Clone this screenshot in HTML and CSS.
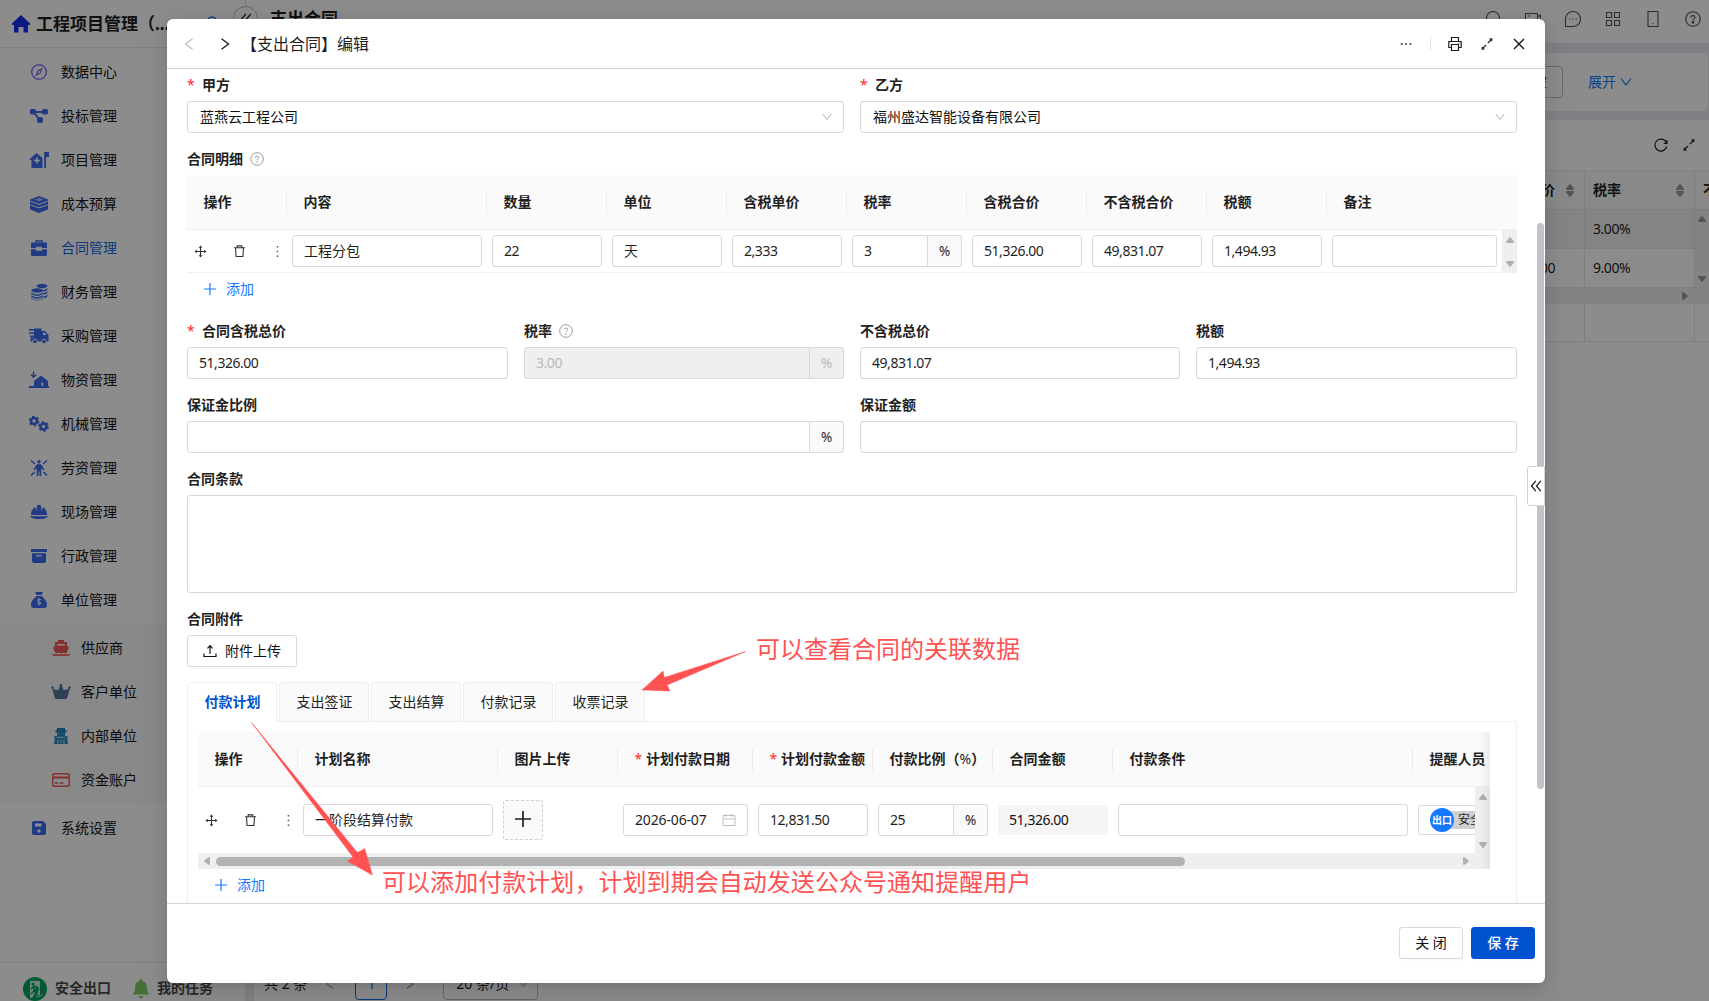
FILE: index.html
```html
<!DOCTYPE html>
<html lang="zh-CN">
<head>
<meta charset="utf-8">
<title>支出合同</title>
<link rel="stylesheet" href="styles.css">
</head>
<body>
<svg class="defs" width="0" height="0" aria-hidden="true">
  <symbol id="chev" viewBox="0 0 12 12"><path d="M1 2.500 6 9l5-6.500" fill="none" stroke="currentColor" stroke-width="1.200"/></symbol>
  <symbol id="left" viewBox="0 0 12 12"><path d="M9.500.800 2.500 6l7 5.200" fill="none" stroke="currentColor" stroke-width="1.200"/></symbol>
  <symbol id="right" viewBox="0 0 12 12"><path d="M2.500.800 9.500 6l-7 5.200" fill="none" stroke="currentColor" stroke-width="1.400"/></symbol>
  <symbol id="dbl" viewBox="0 0 12 12"><path d="M5.800.800 1.500 6l4.300 5.200M10.800.800 6.500 6l4.300 5.200" fill="none" stroke="currentColor" stroke-width="1.300"/></symbol>
  <symbol id="expand" viewBox="0 0 14 14"><path d="M7.800 6.200 11 3M6.200 7.800 3 11" stroke="currentColor" stroke-width="1.200"/><path d="M9 1.500 12.500 1.200l-.4 3.500zM5 12.500 1.500 12.800l.4-3.500z" fill="currentColor"/></symbol>
  <symbol id="move" viewBox="0 0 14 14"><path d="M7 2v10M2 7h10" stroke="currentColor" stroke-width="1.200"/><path d="M7 .500 9 3H5zM7 13.500 9 11H5zM.500 7 3 5v4zM13.500 7 11 5v4z" fill="currentColor"/></symbol>
  <symbol id="trash" viewBox="0 0 14 14"><path d="M1 3.500h12M4.500 3.500v-2h5v2M2.700 3.500l.6 9.400h7.400l.6-9.400" fill="none" stroke="currentColor" stroke-width="1.200"/></symbol>
  <symbol id="plus" viewBox="0 0 14 14"><path d="M7 1v12M1 7h12" stroke="currentColor" stroke-width="1.200"/></symbol>
  <symbol id="help" viewBox="0 0 16 16"><circle cx="8" cy="8" r="7.200" fill="none" stroke="currentColor"/><path d="M6 6.500C6 3.900 10 4 10 6.400c0 1.400-2 1.500-2 3" fill="none" stroke="currentColor"/><circle cx="8" cy="11.400" r=".8" fill="currentColor"/></symbol>
  <symbol id="up" viewBox="0 0 8 6"><path d="M3.200.600Q4 0 4.800.600L8 4.800Q8 6 7 6H1Q0 6 0 4.800z" fill="currentColor"/></symbol>
  <symbol id="down" viewBox="0 0 8 6"><path d="M3.200 5.400Q4 6 4.800 5.400L8 1.200Q8 0 7 0H1Q0 0 0 1.200z" fill="currentColor"/></symbol>
</svg>

<div class="app">
  <aside class="side">
    <div class="brand">
      <svg width="18" height="18" viewBox="0 0 18 18"><path d="M9 0 18 8.500V10h-2v7.500h-4.500V12h-5v5.500H2V10H0V8.500z" fill="#1230f5"/></svg>
      <span>工程项目管理（...</span>
      <svg class="find" width="14" height="14" viewBox="0 0 14 14"><circle cx="6" cy="6" r="5" fill="none" stroke="#1677ff" stroke-width="1.400"/><path d="m9.500 9.500 4 4" stroke="#1677ff"/></svg>
    </div>
    <nav class="menu">
      <a class="item"><svg viewBox="0 0 20 20"><circle cx="10" cy="10" r="7.300" fill="none" stroke="#8a76f0" stroke-width="1.500"/><path d="m14 5.500-2.500 6.300L6 14.500l2.500-6.300z" fill="#8a76f0"/><circle cx="10" cy="10" r="1.100" fill="#fff"/></svg>数据中心</a>
      <a class="item"><svg viewBox="0 0 20 20"><path d="M4 6h12M5 6l6 9" stroke="currentColor" stroke-width="2"/><rect x="1" y="3" width="6" height="5.500" rx="1.800" fill="currentColor"/><rect x="13" y="3" width="6" height="5.500" rx="1.800" fill="currentColor"/><rect x="8" y="11" width="6" height="6" rx="2.500" fill="currentColor"/></svg>投标管理</a>
      <a class="item"><svg viewBox="0 0 20 20"><path d="M0 9.500 7.500 3l6 5V18H2.500v-8zM15.500 2H20v5h-3v11h-1.800V2z" fill="currentColor"/><path d="M8 7.500v6M5 10.500h6" stroke="#fff" stroke-width="1.600"/></svg>项目管理</a>
      <a class="item"><svg viewBox="0 0 20 20"><path d="M10 2 19 5.500v10L10 19 1 15.500v-10z" fill="currentColor"/><path d="M1.500 7.300 10 10.500l8.500-3.200M1.500 10.800l5 2 3.500 1 3.500-1 5-2" fill="none" stroke="#fff" stroke-width="1"/><path d="m5.500 5.600 4.500-1.800 4.500 1.800-4.500 1.800z" fill="#fff" opacity=".55"/></svg>成本预算</a>
      <a class="item on"><svg viewBox="0 0 20 20"><path d="M7 4.500V3h6v1.500" fill="none" stroke="#3b6cf0" stroke-width="1.600"/><path d="M3 4.500h14q1 0 1 1V10h-5V8.800H7V10H2V5.500q0-1 1-1zM2 11.200h5v1.600h6v-1.600h5V17q0 1-1 1H3q-1 0-1-1z" fill="#3b6cf0"/></svg>合同管理</a>
      <a class="item"><svg viewBox="0 0 20 20"><g fill="currentColor"><ellipse cx="13" cy="4" rx="5.500" ry="2.200"/><path d="M12 8q5 0 6.500-2v1.500Q17 10 12 9.500zM14.500 11q3-.5 4-2v1.500q-.8 2-4 2.300zM14.500 14.500q3-.5 4-2V14q-.8 2-4 2.300z"/><ellipse cx="8" cy="8.500" rx="5.800" ry="2.200"/><path d="M2.200 10.500q6 4 11.800 0V12q-6 4-11.800 0zM2.200 13.300q6 4 11.800 0v1.500q-6 4-11.800 0zM2.200 16q6 4 11.800 0v.8q-6 3.500-11.800 0z"/></g></svg>财务管理</a>
      <a class="item"><svg viewBox="0 0 20 20"><path d="M0 3.700h5M0 7h5M1 10.300h4" stroke="currentColor" stroke-width="1.400"/><path d="M5 2.500h7.500V5H16l3.500 4v6.500H1.500v-4H5z" fill="currentColor"/><path d="M14 6.500h1.500l2 2.500H14z" fill="#fff"/><circle cx="6" cy="15.500" r="2.300" fill="currentColor" stroke="#fff"/><circle cx="15" cy="15.500" r="2.300" fill="currentColor" stroke="#fff"/></svg>采购管理</a>
      <a class="item"><svg viewBox="0 0 20 20"><path d="M4.500 1.500V7M2 4.700 4.500 7.200 7 4.700" fill="none" stroke="currentColor" stroke-width="1.400"/><path d="M5 16v-5l7-5.500L19 11v5h1v2H0v-2z" fill="currentColor"/><path d="M12.500 16v-4.500l1.800 2V16z" fill="#fff"/></svg>物资管理</a>
      <a class="item"><svg viewBox="0 0 20 20"><g fill="none" stroke="currentColor"><circle cx="5" cy="7" r="3" stroke-width="2.600"/><circle cx="5" cy="7" r="4.600" stroke-width="1.500" stroke-dasharray="2.400 2.410"/><circle cx="14.500" cy="12.500" r="3" stroke-width="2.600"/><circle cx="14.500" cy="12.500" r="4.600" stroke-width="1.500" stroke-dasharray="2.400 2.410"/></g></svg>机械管理</a>
      <a class="item"><svg viewBox="0 0 20 20"><path d="m2 2.500 4 3.500M18 2.500 14 6M2 17.500l3.500-3.500M18 17.500 14.500 14" stroke="currentColor" stroke-width="1.500"/><circle cx="10" cy="3.800" r="1.700" fill="currentColor"/><path d="M8 6.300h4l3.500 5-1.200 1-2-2V18h-1.800v-4.500h-1V18H7.700v-7.700l-2 2-1.200-1z" fill="currentColor"/></svg>劳资管理</a>
      <a class="item"><svg viewBox="0 0 20 20"><path d="M2 13q-.3-5 4-8l1.500 4L8 3.500q2-1.500 4 0L12.500 9 14 5q4.300 3 4 8zM1 14.200h18q-1 2.800-9 2.800t-9-2.800z" fill="currentColor"/></svg>现场管理</a>
      <a class="item"><svg viewBox="0 0 20 20"><path d="M2 3h16v3H2zM3 7.200h14V15q0 2-2 2H5q-2 0-2-2z" fill="currentColor"/><path d="M7 9.800h6" stroke="#fff" stroke-width="1.200"/></svg>行政管理</a>
      <a class="item"><svg viewBox="0 0 20 20"><path d="M6 2h8l-1.500 3h-5zM7.500 6h5q5.500 4.500 5.500 9 0 3-3 3H5q-3 0-3-3 0-4.500 5.500-9z" fill="currentColor"/><path d="M12 9.800Q10 8.800 8.800 9.700q-1 1.500 1.200 2t1.800 1.900q-1.300 1.200-3.600 0M10 8v7.500" fill="none" stroke="#fff"/></svg>单位管理</a>
      <div class="sub">
        <a class="item"><svg viewBox="0 0 20 20" fill="#f25555"><path d="M7 2h6v2h3v4l2 1.500-2.500 5.500h-11L2 9.500 4 8V4h3z"/><path d="M6 6h8v1.500H6z" fill="#fff"/><path d="M1 15.500q2.500 2 4.500 0 2.500 2 4.500 0 2.500 2 4.500 0 2.500 2 4.500 0V17q-2.500 2-4.500.5-2 1.500-4.500 0-2 1.500-4.500 0Q3.500 19 1 17z"/></svg>供应商</a>
        <a class="item"><svg viewBox="0 0 20 20" fill="#55779f"><path d="M1 5.500q3.500 3 6.500 2.500L9 3.500h2l1.500 4.500q3 .5 6.500-2.500L16.500 15q-.5 2-2 2h-9q-1.500 0-2-2z"/><circle cx="1.500" cy="5.500" r="1.300"/><circle cx="18.500" cy="5.500" r="1.300"/><circle cx="10" cy="3" r="1.300"/></svg>客户单位</a>
        <a class="item"><svg viewBox="0 0 20 20" fill="#2385bd"><path d="M6 2h8v2h1.500v2.500H14V10h2.500v2.500H16L17 18H3l1-5.500h-.5V10H6V6.500H4.500V4H6z"/><path d="M7.500 7.500h1M11.500 7.500h1M5.500 11.300h9M7 13.500V18M10 13.500V17M13 13.500V18" stroke="#fff" stroke-width=".8"/></svg>内部单位</a>
        <a class="item"><svg viewBox="0 0 20 20"><rect x="1.800" y="3.800" width="16.400" height="12.400" rx="1.500" fill="none" stroke="#f25555" stroke-width="1.500"/><path d="M2 7.500h16" stroke="#f25555" stroke-width="2"/><path d="M4 13h3M8.500 13h4" stroke="#f25555" stroke-width="1.300"/></svg>资金账户</a>
      </div>
      <a class="item"><svg viewBox="0 0 20 20"><path d="M5 3h9l3 3v9q0 2-2 2H5q-2 0-2-2V5q0-2 2-2z" fill="currentColor"/><path d="M6 5.500h6.500v3H6z" fill="#fff"/><circle cx="10" cy="13" r="1.700" fill="#fff"/></svg>系统设置</a>
    </nav>
    <div class="user">
      <svg width="24" height="24" viewBox="0 0 24 24"><circle cx="12" cy="12" r="12" fill="#00a45f"/><path d="M7 4h10v14h-4l3-5-2-3-3 3 1 3-3 5H7z" fill="#c9efdc"/><circle cx="10" cy="7" r="1.500" fill="#00a45f"/><path d="m8 12 3-3 3 1 2 2M11 10v4l-3 3M11 14l3 2v4" stroke="#00a45f" fill="none" stroke-width="1.500"/><path d="M13 19q4 2 7-2" stroke="#c9efdc" fill="none"/></svg>
      <b>安全出口</b>
      <svg class="bell" width="18" height="20" viewBox="0 0 18 20"><path d="M9 0q1.200 0 1.200 1.800Q15 3 15 9q0 4.500 2.500 6.500H.500Q3 13.500 3 9q0-6 4.800-7.200Q7.800 0 9 0zM6.500 17h5q-.5 2.500-2.500 2.500T6.500 17z" fill="#7fcc66"/></svg>
      <b>我的任务</b>
    </div>
  </aside>

  <main class="main">
    <div class="fold"><svg width="12" height="12"><use href="#dbl"/></svg></div>
    <header class="top">
      <b>支出合同</b>
      <div class="tools">
        <svg viewBox="0 0 16 16"><circle cx="8" cy="7" r="6.500"/><path d="m12.500 12 3 3.500"/></svg>
        <svg viewBox="0 0 16 16"><path d="M.500 2.500h12v11H.500zM12.500 6l3-2v8l-3-2M3 5h2"/></svg>
        <svg viewBox="0 0 16 16"><path d="M.500 15.500V8A7.500 7.500 0 1 1 8 15.500zM4.200 8h1.300M7.400 8h1.300M10.600 8h1.300"/></svg>
        <svg viewBox="0 0 16 16"><path d="M1.500 1.500h5v5h-5zM9.500 1.500h5v5h-5zM1.500 9.500h5v5h-5zM9.500 9.500h5v5h-5z"/></svg>
        <svg viewBox="0 0 16 16"><path d="M3 .500h10v15H3zM7.500 12.500h1"/></svg>
        <svg viewBox="0 0 16 16"><use href="#help"/></svg>
      </div>
    </header>
    <section class="filter"><span class="reset">清 空</span><span class="more">展开<svg width="12" height="12"><use href="#chev"/></svg></span></section>
    <section class="list">
      <div class="bar">
        <svg width="14" height="14" viewBox="0 0 14 14"><path d="M12.400 4.500A6 6 0 1 0 12.800 8.500M12.900 2v3.300H9.800" fill="none" stroke="currentColor" stroke-width="1.200"/></svg>
        <svg width="14" height="14"><use href="#expand"/></svg>
      </div>
      <div class="grid">
        <div class="h price">含税总价<span class="sort"><svg><use href="#up"/></svg><svg><use href="#down"/></svg></span></div>
        <div class="h">税率<span class="sort"><svg><use href="#up"/></svg><svg><use href="#down"/></svg></span></div>
        <div class="h last">不</div>
        <div class="hl"></div><div class="hl num">3.00%</div>
        <div class="vs"><svg><use href="#up"/></svg><svg><use href="#down"/></svg></div>
        <div class="num price">50,000.00</div><div class="num">9.00%</div>
        <div class="hs"><svg width="8" height="6"><use href="#up"/></svg></div>
        <div class="foot"></div><div class="foot"></div><div class="foot last"></div>
      </div>
      <div class="pager"><span>共 2 条</span><svg width="10" height="10"><use href="#left"/></svg><span class="page num">1</span><svg width="10" height="10"><use href="#right"/></svg><span class="size">20 条/页<svg width="9" height="9"><use href="#chev"/></svg></span></div>
    </section>
  </main>
</div>

<div class="mask">
  <div class="modal">
    <header class="mhead">
      <svg class="dim" width="12" height="12"><use href="#left"/></svg>
      <svg class="next" width="12" height="12"><use href="#right"/></svg>
      <h1>【支出合同】编辑</h1>
      <div class="mtools">
        <svg width="12" height="12" viewBox="0 0 12 12"><path d="M.800 6h1.700M5.200 6h1.700M9.600 6h1.700" stroke="currentColor" stroke-width="1.500"/></svg>
        <i class="bar1"></i>
        <svg width="14" height="14" viewBox="0 0 14 14"><path d="M3.500 4.500v-4h7v4M3.500 10.500H.800v-6h12.400v6h-2.700M3.500 7.500h7v6h-7zM10.500 6.200h1" fill="none" stroke="currentColor" stroke-width="1.200"/></svg>
        <svg width="14" height="14"><use href="#expand"/></svg>
        <svg width="12" height="12" viewBox="0 0 12 12"><path d="m1 1 10 10M11 1 1 11" stroke="currentColor" stroke-width="1.500"/></svg>
      </div>
    </header>

    <div class="mbody">
      <div class="row two">
        <div><label class="req">甲方</label><div class="in sel">蓝燕云工程公司<svg width="10" height="10"><use href="#chev"/></svg></div></div>
        <div><label class="req">乙方</label><div class="in sel">福州盛达智能设备有限公司<svg width="10" height="10"><use href="#chev"/></svg></div></div>
      </div>
      <div class="detail">
        <label>合同明细<svg width="14" height="14"><use href="#help"/></svg></label>
        <div class="thead d">
          <span>操作</span><span>内容</span><span>数量</span><span>单位</span><span>含税单价</span><span>税率</span><span>含税合价</span><span>不含税合价</span><span>税额</span><span>备注</span>
        </div>
        <div class="trow d">
          <div class="ops"><svg width="13" height="13"><use href="#move"/></svg><svg width="13" height="14"><use href="#trash"/></svg><svg class="dots" width="3" height="13" viewBox="0 0 3 13"><path d="M.700 1h1.500v1.500H.700zM.700 5.800h1.500v1.500H.700zM.700 10.500h1.500V12H.700z" fill="currentColor"/></svg></div>
          <div><div class="in">工程分包</div></div>
          <div><div class="in num">22</div></div>
          <div><div class="in">天</div></div>
          <div><div class="in num">2,333</div></div>
          <div class="grp"><div class="in num">3</div><em>%</em></div>
          <div><div class="in num">51,326.00</div></div>
          <div><div class="in num">49,831.07</div></div>
          <div><div class="in num">1,494.93</div></div>
          <div><div class="in"></div></div>
          <div class="vscroll"><svg><use href="#up"/></svg><svg><use href="#down"/></svg></div>
        </div>
        <div class="add"><svg width="14" height="14"><use href="#plus"/></svg>添加</div>
      </div>
      <div class="row four">
        <div><label class="req">合同含税总价</label><div class="in num">51,326.00</div></div>
        <div><label>税率<svg width="14" height="14"><use href="#help"/></svg></label><div class="grp off"><div class="in num">3.00</div><em>%</em></div></div>
        <div><label>不含税总价</label><div class="in num">49,831.07</div></div>
        <div><label>税额</label><div class="in num">1,494.93</div></div>
      </div>
      <div class="row two">
        <div><label>保证金比例</label><div class="grp"><div class="in"></div><em>%</em></div></div>
        <div><label>保证金额</label><div class="in"></div></div>
      </div>
      <div class="row"><div><label>合同条款</label><div class="in area"></div></div></div>
      <div class="row"><div><label>合同附件</label><span class="btn up"><svg width="14" height="14" viewBox="0 0 14 14"><path d="M1 9.500V12.500h12V9.500M7 10V2M4.500 4.300 7 1.600l2.500 2.700" fill="none" stroke="currentColor" stroke-width="1.200"/></svg>附件上传</span></div></div>

      <div class="tabs"><span class="cur">付款计划</span><span>支出签证</span><span>支出结算</span><span>付款记录</span><span>收票记录</span></div>
      <div class="panel">
        <div class="plan">
          <div class="thead p">
            <span>操作</span><span>计划名称</span><span>图片上传</span><span class="req">计划付款日期</span><span class="req">计划付款金额</span><span>付款比例（<i>%</i>）</span><span>合同金额</span><span>付款条件</span><span>提醒人员</span>
          </div>
          <div class="trow p">
            <div class="ops"><svg width="13" height="13"><use href="#move"/></svg><svg width="13" height="14"><use href="#trash"/></svg><svg class="dots" width="3" height="13" viewBox="0 0 3 13"><path d="M.700 1h1.500v1.500H.700zM.700 5.800h1.500v1.500H.700zM.700 10.500h1.500V12H.700z" fill="currentColor"/></svg></div>
            <div><div class="in">一阶段结算付款</div></div>
            <div><div class="pic"><svg width="18" height="18" viewBox="0 0 18 18"><path d="M9 1v16M1 9h16" stroke="currentColor" stroke-width="1.700"/></svg></div></div>
            <div><div class="in num date">2026-06-07<svg width="14" height="14" viewBox="0 0 14 14"><path d="M1 2.500h12v10H1zM1 6h12M4 .500v3.500M10 .500v3.500" fill="none" stroke="currentColor"/></svg></div></div>
            <div><div class="in num">12,831.50</div></div>
            <div class="grp"><div class="in num">25</div><em>%</em></div>
            <div><div class="ro num">51,326.00</div></div>
            <div><div class="in"></div></div>
            <div class="clip"><div class="people"><b>出口</b><span>安全出口</span></div></div>
            <div class="vscroll"><svg><use href="#up"/></svg><svg><use href="#down"/></svg></div>
          </div>
          <div class="hscroll"><svg width="8" height="6"><use href="#up"/></svg><i></i><svg width="8" height="6"><use href="#up"/></svg></div>
        </div>
        <div class="add"><svg width="14" height="14"><use href="#plus"/></svg>添加</div>
      </div>
      <div class="thumb"></div>
      <div class="drawer"><svg width="12" height="12"><use href="#dbl"/></svg></div>
    </div>

    <footer class="mfoot"><span class="btn">关 闭</span><span class="btn save">保 存</span></footer>
  </div>
</div>

<svg class="notes" width="1709" height="1001" viewBox="0 0 1709 1001">
  <path d="M745.500 651.500 664.300 677.500 663 671 642 690 670 691 667.200 685zM251.500 722.500 357.300 852.500 364.700 848.700 372.400 875 347.700 861.300 353 857z" fill="#ff5252" stroke="#ff5252" stroke-width=".5"/>
</svg>
<p class="note n1">可以查看合同的关联数据</p>
<p class="note n2">可以添加付款计划，计划到期会自动发送公众号通知提醒用户</p>
</body>
</html>
```
FILE: styles.css
```css
* { box-sizing: border-box; }
body {
  margin: 0;
  width: 1709px;
  height: 1001px;
  overflow: hidden;
  font: 14px/22px "Noto Sans", "Noto Sans CJK SC", sans-serif;
  color: #1f1f1f;
  background: #fff;
}
svg { display: block; flex: none; }
.defs { position: absolute; }
i, em { font-style: normal; }
.num { letter-spacing: -0.46px; }

/* ---- page behind the dialog ---- */
.app { display: flex; width: 1709px; height: 1001px; background: #e9ecf2; }
.side { width: 245px; display: flex; flex-direction: column; background: #fff; }
.brand {
  height: 48px; padding: 0 0 0 12px; display: flex; align-items: center;
  border-bottom: 1px solid #e6e6e6; font-size: 17px; font-weight: 700;
}
.brand span { margin-left: 6px; width: 164px; white-space: nowrap; }
.find { margin: 0 0 2px 6px; }
.menu { flex: 1; display: flex; flex-direction: column; gap: 4px; padding-top: 4px; }
.item {
  height: 40px; padding-left: 29px; display: flex; align-items: center; gap: 12px; color: #141414;
}
.item svg { width: 20px; height: 20px; color: #3b6cf0; }
.item.on { color: #1268e8; }
.sub { background: #fafafa; padding: 4px 0; display: flex; flex-direction: column; gap: 4px; }
.sub .item { padding-left: 51px; gap: 10px; }
.user {
  height: 39px; border-top: 1px solid #e6e6e6; display: flex; align-items: center;
  padding: 13px 0 0 23px; color: #4a4a4a;
}
.user b { margin: -2px 0 0 8px; white-space: nowrap; }
.user .bell { margin-left: 21px; }
.user .bell + b { margin-left: 7px; }

.main { flex: 1; position: relative; display: flex; flex-direction: column; }
.fold {
  position: absolute; left: -12px; top: 6px; width: 25px; height: 25px; border-radius: 50%;
  border: 1px solid #bbb; background: #fff; display: flex; align-items: center; justify-content: center;
}
.top {
  height: 43px; background: #fff; display: flex; justify-content: space-between;
  padding: 0 8px 7px 24px; align-items: center; font-size: 17px; border-left: 1px solid #ddd;
}
.top b { padding-top: 2px; }
.tools { display: flex; gap: 24px; padding-top: 2px; }
.tools svg { width: 16px; height: 16px; fill: none; stroke: #555; color: #555; stroke-width: 1.1; }
.filter {
  height: 58px; margin: 10px 1px 0 9px; background: #fff; border-radius: 4px;
  display: flex; align-items: center; justify-content: flex-end; padding-right: 76px;
}
.reset { border: 1px solid #bfbfbf; border-radius: 4px; height: 32px; line-height: 30px; padding: 0 15px; margin-right: 25px; }
.more { display: flex; align-items: center; gap: 4px; color: #1677ff; }
.list { flex: 1; margin: 9px 0 0 9px; background: #fff; display: flex; flex-direction: column; }
.bar { height: 50px; display: flex; align-items: center; justify-content: flex-end; gap: 14px; padding-right: 13px; }
.grid {
  display: grid; grid-template-columns: 1fr 110px 14px;
  grid-template-rows: 39px 39px 39px 16px 38px; border-top: 1px solid #eee;
}
.grid > div { border-right: 1px solid #e6e6e6; border-bottom: 1px solid #e6e6e6; padding: 0 8px; display: flex; align-items: center; overflow: hidden; }
.grid .h { background: #fafafa; font-weight: 700; justify-content: space-between; padding-right: 10px; }
.grid .hl { background: #f0f0f0; }
.grid .price { justify-content: flex-end; padding-right: 29px; }
.grid .h.price { padding-right: 10px; gap: 11px; }
.grid .last { border-right: 0; }
.grid .vs {
  grid-row: 2 / 4; grid-column: 3; flex-direction: column; justify-content: space-between;
  padding: 6px 0; background: #efefef; color: #999; border: 0;
}
.vs svg, .sort svg { width: 8px; height: 6px; }
.sort { display: flex; flex-direction: column; gap: 1px; color: #999; }
.grid .hs { grid-column: 1 / 4; background: #efefef; justify-content: flex-end; color: #999; border: 0; padding-right: 20px; }
.hs svg { transform: rotate(90deg); }
.pager { margin-top: auto; padding: 0 0 1px 10px; display: flex; align-items: center; color: #222; }
.pager svg { color: #888; margin: 0 20px 0 18px; }
.page { border: 1px solid #1268e8; border-radius: 4px; width: 32px; height: 32px; text-align: center; line-height: 30px; color: #1268e8; }
.size { border: 1px solid #bbb; border-radius: 4px; height: 32px; width: 95px; display: flex; align-items: center; padding-left: 12px; margin-left: 8px; white-space: nowrap; }
.pager .size svg { margin: 0 0 0 10px; }

/* ---- dialog ---- */
.mask { position: absolute; inset: 0; background: rgba(0, 0, 0, .45); padding: 19px 0 0 167px; }
.modal {
  width: 1378px; height: 964px; background: #fff; border-radius: 6px; overflow: hidden;
  display: flex; flex-direction: column;
  box-shadow: 0 6px 16px rgba(0, 0, 0, .08), 0 3px 6px -4px rgba(0, 0, 0, .12), 0 9px 28px 8px rgba(0, 0, 0, .05);
}
.mhead { height: 50px; flex: none; border-bottom: 1px solid #d4d4d4; display: flex; align-items: center; padding: 0 20px 0 16px; }
.mhead .dim { color: #bfbfbf; }
.mhead .next { margin-left: 24px; }
.mhead h1 { margin: 0 0 0 10px; padding-bottom: 2px; font-size: 16px; font-weight: 400; white-space: nowrap; font-family: "Noto Sans CJK SC", sans-serif; }
.mtools { margin-left: auto; display: flex; align-items: center; }
.mtools .bar1 { width: 1px; height: 13px; background: #e3e3e3; margin: 0 17px 0 18px; }
.mtools svg + svg { margin-left: 18px; }
.mtools svg:last-child { margin-left: 19px; }
.mbody { flex: 1; min-height: 0; overflow: hidden; position: relative; padding: 0 28px 0 20px; }
.mbody label { display: flex; height: 32px; align-items: center; font-weight: 700; white-space: nowrap; padding-bottom: 1px; }
label svg { margin: 1px 0 0 7px; color: #8c8c8c; }
.req::before { content: "*"; color: #ff2a2a; width: 15px; font-weight: 400; flex: none; }
.row { display: grid; gap: 16px; margin-bottom: 10px; }
.two { grid-template-columns: 1fr 1fr; }
.four { grid-template-columns: 321px 320px 320px 321px; }
.in {
  height: 32px; border: 1px solid #d9d9d9; border-radius: 3px; background: #fff;
  padding: 0 11px; line-height: 30px; white-space: nowrap;
}
.sel, .date { display: flex; align-items: center; justify-content: space-between; color: #111; }
.sel { padding-left: 12px; }
.sel svg, .date svg { color: #bfbfbf; }
.sel svg { color: #b0b0b0; }
.date { letter-spacing: -0.15px; color: inherit; }
.area { height: 98px; }
.grp { display: flex; }
.grp .in { flex: 1; border-radius: 3px 0 0 3px; }
.grp em {
  width: 34px; height: 32px; border: 1px solid #d9d9d9; border-left: 0; border-radius: 0 3px 3px 0;
  background: #fafafa; line-height: 30px; text-align: center; font-size: 13.5px;
}
.off .in, .off em { background: #efefef; color: #b8b8b8; }

.detail { margin-bottom: 10px; }
.thead, .trow { display: grid; }
.d { grid-template-columns: 100px 200px repeat(7, 120px) 1fr; }
.trow.d { grid-template-columns: 100px 200px repeat(7, 120px) 1fr 15px; height: 43px; }
.thead { height: 55px; background: #fafafa; border-bottom: 1px solid #f0f0f0; align-items: center; font-weight: 700; border-radius: 3px 3px 0 0; }
.thead span { padding-left: 16.5px; height: 23px; line-height: 21px; white-space: nowrap; border-right: 1px solid #ececec; }
.thead span:last-child { border-right: 0; }
.thead .req { display: flex; }
.thead .req::before { width: 11.5px; }
.thead i { font-weight: 400; font-size: 14px; }
.trow { border-bottom: 1px solid #f0f0f0; }
.trow > div { padding: 0 5px; align-self: center; min-width: 0; }
.trow .ops { display: flex; align-items: center; padding: 0 8px 0 6.5px; color: #333; }
.ops svg + svg { margin-left: 26px; }
.ops .dots { margin-left: auto; color: #555; }
.trow .vscroll {
  align-self: stretch; background: #efefef; padding: 7px 0 5px; color: #b0b0b0;
  display: flex; flex-direction: column; align-items: center; justify-content: space-between;
}
.vscroll svg { width: 8px; height: 6px; }
.add { height: 32px; display: flex; align-items: center; gap: 9px; padding-left: 16px; color: #1677ff; }
.btn {
  height: 32px; display: inline-flex; align-items: center; justify-content: center; border: 1px solid #d9d9d9;
  border-radius: 3px; padding: 0 15px; background: #fff; box-shadow: 0 2px 0 rgba(0, 0, 0, .02); color: #111;
}
.up { gap: 8px; display: flex; width: 110px; margin-bottom: 5px; padding: 0; white-space: nowrap; }

.tabs { display: flex; gap: 2px; height: 39px; }
.tabs span {
  width: 90px; text-align: center; line-height: 38px; background: #fafafa;
  border: 1px solid #f0f0f0; border-bottom: 0; border-radius: 4px 4px 0 0; padding-left: 1px;
}
.tabs .cur { background: #fff; color: #0052d0; font-weight: 700; height: 41px; position: relative; }
.panel { border: 1px solid #f0f0f0; height: 300px; padding: 10px; }
.plan { width: 1292px; position: relative; }
.plan::after {
  content: ""; position: absolute; top: 0; right: 0; bottom: 0; width: 10px;
  background: linear-gradient(to right, transparent, rgba(0, 0, 0, .06));
}
.thead.p { grid-template-columns: 100px 200px 120px 135px 120px 120px 120px 300px 1fr; }
.trow.p { grid-template-columns: 100px 200px 120px 135px 120px 120px 120px 300px 1fr 15px; height: 66px; border-bottom: 0; }
.pic {
  width: 40px; height: 40px; border: 1px dashed #d0d0d0; border-radius: 3px; background: #fafafa;
  display: flex; align-items: center; justify-content: center; padding-bottom: 2px;
}
.ro { height: 30px; line-height: 30px; background: #f5f5f5; border-radius: 3px; padding-left: 11px; color: #111; }
.trow .clip { padding: 0 0 0 5px; overflow: hidden; }
.people { width: 150px; height: 30px; border: 1px solid #d9d9d9; border-radius: 3px; display: flex; align-items: center; padding-left: 11px; }
.people b {
  width: 24px; height: 24px; border-radius: 50%; background: #1677ff; color: #fff; font-size: 10px;
  line-height: 24px; text-align: center; position: relative; white-space: nowrap; font-weight: 700;
}
.people span { height: 18px; line-height: 18px; font-size: 12px; background: #d0d0d0; margin-left: -12px; padding: 0 6px 0 16px; white-space: nowrap; }
.hscroll { height: 16px; background: #efefef; display: flex; align-items: center; padding: 0 20px 0 5px; color: #b0b0b0; }
.hscroll i { width: 969px; height: 9px; border-radius: 5px; background: #b2b2b2; margin: 0 auto 0 5px; }
.hscroll svg:first-child { transform: rotate(-90deg); }
.hscroll svg:last-child { transform: rotate(90deg); }

.thumb { position: absolute; right: 1px; top: 154px; width: 7px; height: 566px; border-radius: 4px; background: #c1c2ca; }
.drawer {
  position: absolute; right: 0; top: 397px; width: 18px; height: 40px; border: 1px solid #d4d4d4;
  background: #fff; border-radius: 3px 0 0 3px; display: flex; align-items: center; justify-content: center;
}
.mfoot { height: 80px; flex: none; border-top: 1px solid #d4d4d4; display: flex; justify-content: flex-end; gap: 8px; padding: 23px 10px 0 0; }
.mfoot .btn { width: 64px; padding: 0; }
.mfoot .save { background: #0052d0; border-color: #0052d0; color: #fff; font-weight: 500; }

/* ---- annotations over the dialog ---- */
.notes { position: absolute; left: 0; top: 0; }
.note { position: absolute; margin: 0; font: 400 24px/36px "Noto Sans CJK SC", sans-serif; color: #ff5252; white-space: nowrap; }
.n1 { left: 756px; top: 630px; }
.n2 { left: 382px; top: 863px; letter-spacing: .05px; }
```
